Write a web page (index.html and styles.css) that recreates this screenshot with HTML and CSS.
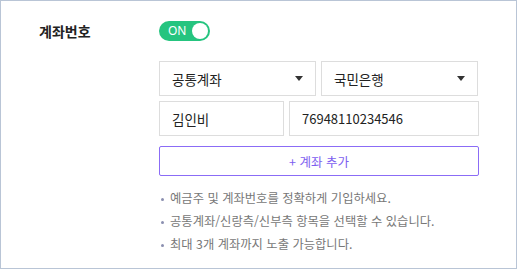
FILE: index.html
```html
<!DOCTYPE html>
<html lang="ko">
<head>
  <meta charset="UTF-8" />
  <title>계좌번호</title>
  <link rel="stylesheet" href="styles.css">
</head>
<body>
  <div class="panel">
    <div class="row">
      <div class="label">계좌번호</div>
      <div class="field">
        <button class="switch on" id="accountSwitch">
          <span class="switch-text">ON</span>
          <span class="knob"></span>
        </button>

        <div class="account">
          <div class="pair">
            <div class="select-wrap half">
              <select class="select">
                <option>공통계좌</option>
                <option>신랑측</option>
                <option>신부측</option>
              </select>
            </div>
            <div class="select-wrap half">
              <select class="select">
                <option>국민은행</option>
                <option>신한은행</option>
                <option>우리은행</option>
              </select>
            </div>
          </div>

          <div class="pair">
            <input type="text" class="text-box name" value="김인비" />
            <input type="text" class="text-box number" value="76948110234546" />
          </div>

          <button class="add-btn">+ 계좌 추가</button>

          <ul class="notes">
            <li>예금주 및 계좌번호를 정확하게 기입하세요.</li>
            <li>공통계좌/신랑측/신부측 항목을 선택할 수 있습니다.</li>
            <li>최대 3개 계좌까지 노출 가능합니다.</li>
          </ul>
        </div>
      </div>
    </div>
  </div>
</body>
</html>
```

FILE: styles.css
```css
* {
  box-sizing: border-box;
}

body {
  margin: 0;
  font-family: "Noto Sans CJK KR", "Noto Sans", sans-serif;
  color: #222;
  background: #fff;
}

.panel {
  width: 517px;
  height: 269px;
  border: 1px solid #b9c5d6;
  padding: 20px 0 0 38px;
}

.row {
  display: flex;
}

.label {
  width: 120px;
  font-size: 14px;
  font-weight: 700;
  line-height: 20px;
  color: #222;
}

.field {
  width: 320px;
}

.switch {
  display: flex;
  align-items: center;
  justify-content: space-between;
  width: 51px;
  height: 20px;
  padding: 0 2px 0 9px;
  border: none;
  border-radius: 10px;
  background: #25c47f;
  cursor: pointer;
}

.switch-text {
  color: #fff;
  font-family: "Noto Sans", sans-serif;
  font-size: 12px;
  line-height: 1;
}

.knob {
  width: 16px;
  height: 16px;
  border-radius: 50%;
  background: #fff;
}

.account {
  margin-top: 20px;
  display: flex;
  flex-direction: column;
  gap: 5px;
}

.pair {
  display: flex;
  gap: 5px;
}

.select-wrap {
  position: relative;
}

.select-wrap.half {
  width: 157px;
}

.select-wrap::after {
  content: "";
  position: absolute;
  right: 13px;
  top: 15px;
  border-left: 4px solid transparent;
  border-right: 4px solid transparent;
  border-top: 5px solid #333;
  pointer-events: none;
}

.select {
  appearance: none;
  -webkit-appearance: none;
  width: 100%;
  height: 35px;
  padding: 0 12px;
  border: 1px solid #ddd;
  border-radius: 0;
  background: #fff;
  font-family: inherit;
  font-size: 13.5px;
  color: #222;
  outline: none;
}

.text-box {
  height: 35px;
  padding: 0 12px;
  border: 1px solid #ddd;
  font-family: inherit;
  font-size: 13.5px;
  color: #222;
  outline: none;
}

.text-box.number {
  font-size: 13px;
}

.text-box.name {
  width: 125px;
}

.text-box.number {
  width: 190px;
}

.add-btn {
  margin-top: 5px;
  height: 30px;
  border: 1px solid #8b6cf6;
  border-radius: 2px;
  background: #fff;
  color: #7d5ef0;
  font-family: inherit;
  font-size: 12.5px;
  cursor: pointer;
}

.notes {
  list-style: none;
  margin: 6px 0 0;
  padding: 0;
}

.notes li {
  position: relative;
  padding-left: 11px;
  font-size: 12.3px;
  line-height: 23px;
  color: #777;
}

.notes li::before {
  content: "";
  position: absolute;
  left: 2px;
  top: 11px;
  width: 3px;
  height: 3px;
  border-radius: 50%;
  background: #8b8fb0;
}
```
